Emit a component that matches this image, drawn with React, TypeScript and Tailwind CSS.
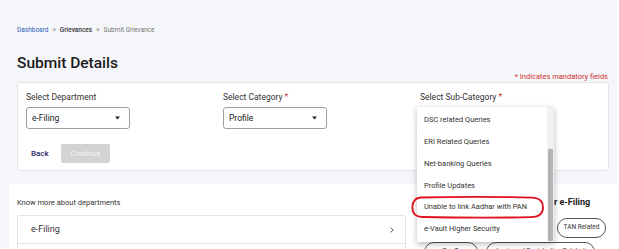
const Caret = () => (
  <svg width="5" height="4" viewBox="0 0 5 4" className="shrink-0">
    <path d="M0 0.5 L5 0.5 L2.5 3.5 Z" fill="#222" />
  </svg>
);

function SelectField({ label, value, required }: { label: string; value: string; required?: boolean }) {
  return (
    <div className="w-[197px] shrink-0">
      <div className="text-[8.5px] leading-[12px] text-[#333]">
        {label}
        {required && <span className="text-[#d32f2f]"> *</span>}
      </div>
      <div className="mt-[4px] w-[104px] h-[22px] border border-[#9e9e9e] rounded-[3px] flex items-center justify-between pl-[5px] pr-[9px] text-[8.5px] text-[#222] bg-white">
        <span>{value}</span>
        <Caret />
      </div>
    </div>
  );
}

const subCategories = [
  "DSC related Queries",
  "ERI Related Queries",
  "Net-banking Queries",
  "Profile Updates",
  "Unable to link Aadhar with PAN",
  "e-Vault Higher Security",
];

function Dropdown() {
  return (
    <div className="absolute left-[-3px] top-0 w-[137px] h-[135px] bg-white shadow-[0_2px_6px_rgba(0,0,0,0.28)]">
      <ul className="pt-[2px]">
        {subCategories.map(s => (
          <li key={s} className="h-[21.8px] flex items-center pl-[7px] text-[7.5px] text-[#333]">
            {s}
          </li>
        ))}
      </ul>
      {/* scrollbar */}
      <div className="absolute right-0 top-0 w-[7px] h-full bg-[#f1f1f1]">
        <div className="absolute left-[1px] right-[1px] top-[42px] bottom-[1px] bg-[#b3b3b3] rounded-[1px]" />
      </div>
      {/* red highlight */}
      <svg className="absolute left-[-6px] top-[89px]" width="134" height="23" viewBox="0 0 134 23">
        <path
          d="M10 1.5 C40 0.8 95 1 122 1.6 C129 2 132 6 132 11.5 C132 17.5 128 21 120 21.2 C90 21.8 40 21.6 11 21 C4 20.8 1.3 17 1.4 11.5 C1.5 5.5 4 1.7 10 1.5 Z"
          fill="none"
          stroke="#e0101e"
          strokeWidth="1.8"
        />
      </svg>
    </div>
  );
}

function Pill({ text, w }: { text: string; w: string }) {
  return (
    <div className={`${w} h-[20px] shrink-0 rounded-full border border-[#555] flex items-center justify-center text-[6.5px] text-[#333] whitespace-nowrap overflow-hidden`}>
      {text}
    </div>
  );
}

export default function App() {
  return (
    <div className="w-[619px] h-[249px] overflow-hidden bg-white font-['Roboto',sans-serif]">
      <div className="w-[617px] bg-[#f5f6fa]">
        <div className="pb-[13px]">
          {/* breadcrumb */}
          <div className="pt-[25px] pl-[17px] h-[35px] text-[6.5px] leading-[10px] flex items-start gap-[4px]">
            <span className="text-[#2d5fb8]">Dashboard</span>
            <span className="text-[#777]">&gt;</span>
            <span className="text-[#333] font-medium">Grievances</span>
            <span className="text-[#777]">&gt;</span>
            <span className="text-[#777]">Submit Grievance</span>
          </div>
          <h1 className="mt-[19px] pl-[17px] text-[15.5px] leading-[18px] font-medium text-[#1a1a1a]">Submit Details</h1>
          <div className="text-right pr-[9px] text-[7.5px] leading-[10px] text-[#d32f2f]">* Indicates mandatory fields</div>

          {/* card */}
          <div className="ml-[17px] w-[592px] h-[89px] bg-white border border-[#e3e5ea] rounded-[3px] pt-[8px] pl-[8px]">
            <div className="flex">
              <SelectField label="Select Department" value="e-Filing" />
              <SelectField label="Select Category" value="Profile" required />
              <div className="relative">
                <SelectField label="Select Sub-Category" value="" required />
                <div className="absolute left-0 top-[16px]">
                  <Dropdown />
                </div>
              </div>
            </div>
            <div className="mt-[15px] flex items-center">
              <button className="w-[35px] pl-[5px] text-left text-[8px] font-medium text-[#1f2a6b]">Back</button>
              <button className="w-[49px] h-[19px] rounded-[2px] bg-[#d3d3d3] text-[7.5px] text-[#f4f4f4]">Continue</button>
            </div>
          </div>
        </div>

        {/* lower section */}
        <div className="ml-[9px] w-[610px] h-[64px] bg-white flex">
          <div className="w-[397px] shrink-0 pl-[8px]">
            <div className="pt-[14px] text-[7.5px] leading-[10px] text-[#333]">Know more about departments</div>
            <div className="mt-[7px] border border-[#e3e5ea] rounded-[2px]">
              <div className="h-[28px] flex items-center justify-between pl-[13px] pr-[11px] border-b border-[#e3e5ea]">
                <span className="text-[9px] text-[#333]">e-Filing</span>
                <svg width="4" height="6" viewBox="0 0 4 6">
                  <path d="M0.6 0.6 L3.2 3 L0.6 5.4" fill="none" stroke="#444" strokeWidth="0.9" />
                </svg>
              </div>
              <div className="h-[28px]" />
            </div>
          </div>
          <div className="ml-[18px] flex-1">
            <div className="pt-[13px] pl-[3px] text-[9px] leading-[10px] font-bold text-[#222] whitespace-nowrap">
              Frequently raised grievances for e-Filing
            </div>
            <div className="mt-[11px] flex gap-[6px]">
              <Pill text="PAN Related" w="w-[58px]" />
              <Pill text="Refund Related" w="w-[63px]" />
              <Pill text="TAN Related" w="w-[49px]" />
            </div>
            <div className="mt-[4px] flex gap-[8px]">
              <Pill text="e-Pay Tax" w="w-[54px]" />
              <Pill text="Login and Registration Related" w="w-[109px]" />
            </div>
          </div>
        </div>
      </div>
    </div>
  );
}
